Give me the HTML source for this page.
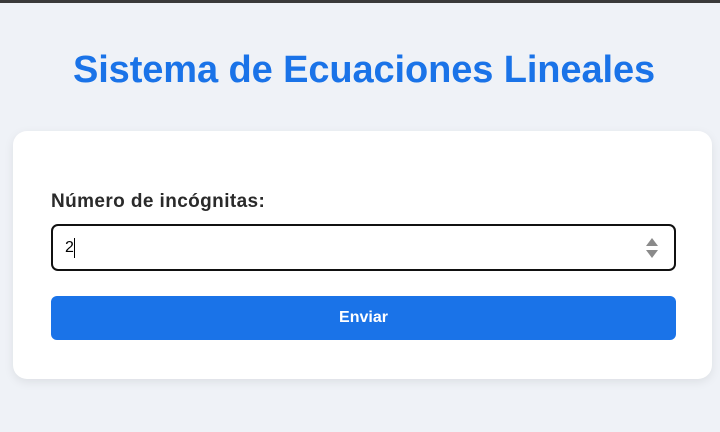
<!DOCTYPE html>
<html><head><meta charset="utf-8"><style>
*{box-sizing:border-box;margin:0;padding:0}
body{width:720px;height:432px;background:#eff2f7;font-family:"Liberation Sans",sans-serif;position:relative;overflow:hidden}
.bar{position:absolute;left:0;top:0;width:720px;height:3px;background:#3a3a3a}
h1{position:absolute;left:4px;top:46px;width:720px;text-align:center;color:#1a73e8;font-size:38px;font-weight:bold;letter-spacing:-0.1px;line-height:48px}
.card{position:absolute;left:13px;top:131px;width:699px;height:248px;background:#fff;border-radius:14px;box-shadow:0 3px 10px rgba(0,0,0,0.08)}
.lbl{position:absolute;left:51px;top:191px;font-size:19px;font-weight:bold;color:#2a2a2a;letter-spacing:0.4px}
.inp{position:absolute;left:51px;top:224px;width:625px;height:47px;border:2px solid #111;border-radius:7px;background:#fff}
.inp span{position:absolute;left:12px;top:12px;font-size:16px;color:#000;border-right:1px solid #000;line-height:20px}
.btn{position:absolute;left:51px;top:296px;width:625px;height:44px;background:#1a73e8;border-radius:6px;color:#fff;font-weight:bold;font-size:16px;text-align:center;line-height:44px}
</style></head><body>
<div class="bar"></div>
<h1>Sistema de Ecuaciones Lineales</h1>
<div class="card"></div>
<div class="lbl">Número de incógnitas:</div>
<div class="inp"><span>2</span>
<svg width="14" height="24" viewBox="0 0 14 24" style="position:absolute;right:15px;top:10px"><path d="M1 10 L7 2 L13 10Z" fill="#8a8a8a"/><path d="M1 14 L7 22 L13 14Z" fill="#8a8a8a"/></svg></div>
<div class="btn">Enviar</div>
</body></html>
